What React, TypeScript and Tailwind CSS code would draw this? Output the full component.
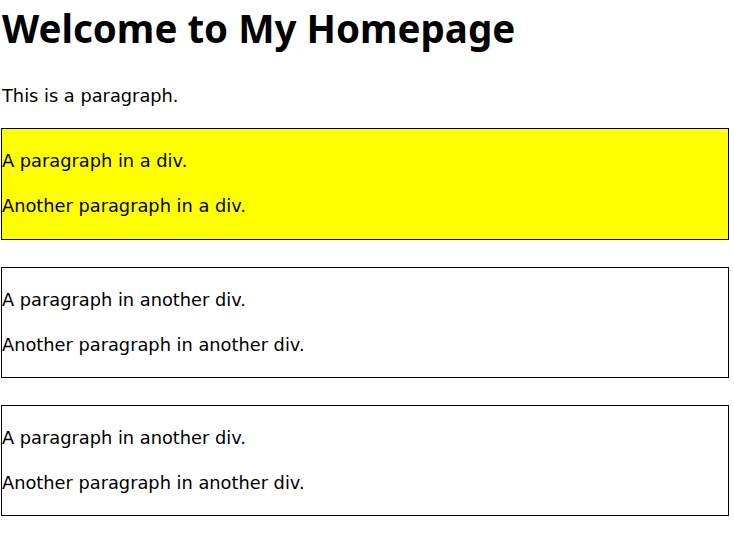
export default function App() {
  const boxes = [
    { first: "A paragraph in a div.", second: "Another paragraph in a div.", tone: "bg-[#ffff00]", pb: "pb-[19px]" },
    { first: "A paragraph in another div.", second: "Another paragraph in another div.", tone: "bg-white", pb: "pb-[18px]" },
    { first: "A paragraph in another div.", second: "Another paragraph in another div.", tone: "bg-white", pb: "pb-[18px]" },
  ];

  return (
    <div className="min-h-screen w-[734px] bg-white pl-[1px] font-['DejaVu_Sans',sans-serif] text-[17.8px] text-black">
      <h1 className="pl-[1px] pt-[6px] font-['Noto_Sans',sans-serif] text-[38.5px] font-bold leading-[44px]">
        Welcome to My Homepage
      </h1>
      <p className="mt-[31px] pl-[1px] leading-[29px]">This is a paragraph.</p>

      <div className="mt-[18px] flex flex-col gap-[27px]">
        {boxes.map((b, i) => (
          <div
            key={i}
            className={`flex w-[728px] flex-col gap-[16px] border border-black pt-[17px] ${b.pb} ${b.tone}`}
          >
            <p className="leading-[29px]">{b.first}</p>
            <p className="leading-[29px]">{b.second}</p>
          </div>
        ))}
      </div>
    </div>
  );
}
